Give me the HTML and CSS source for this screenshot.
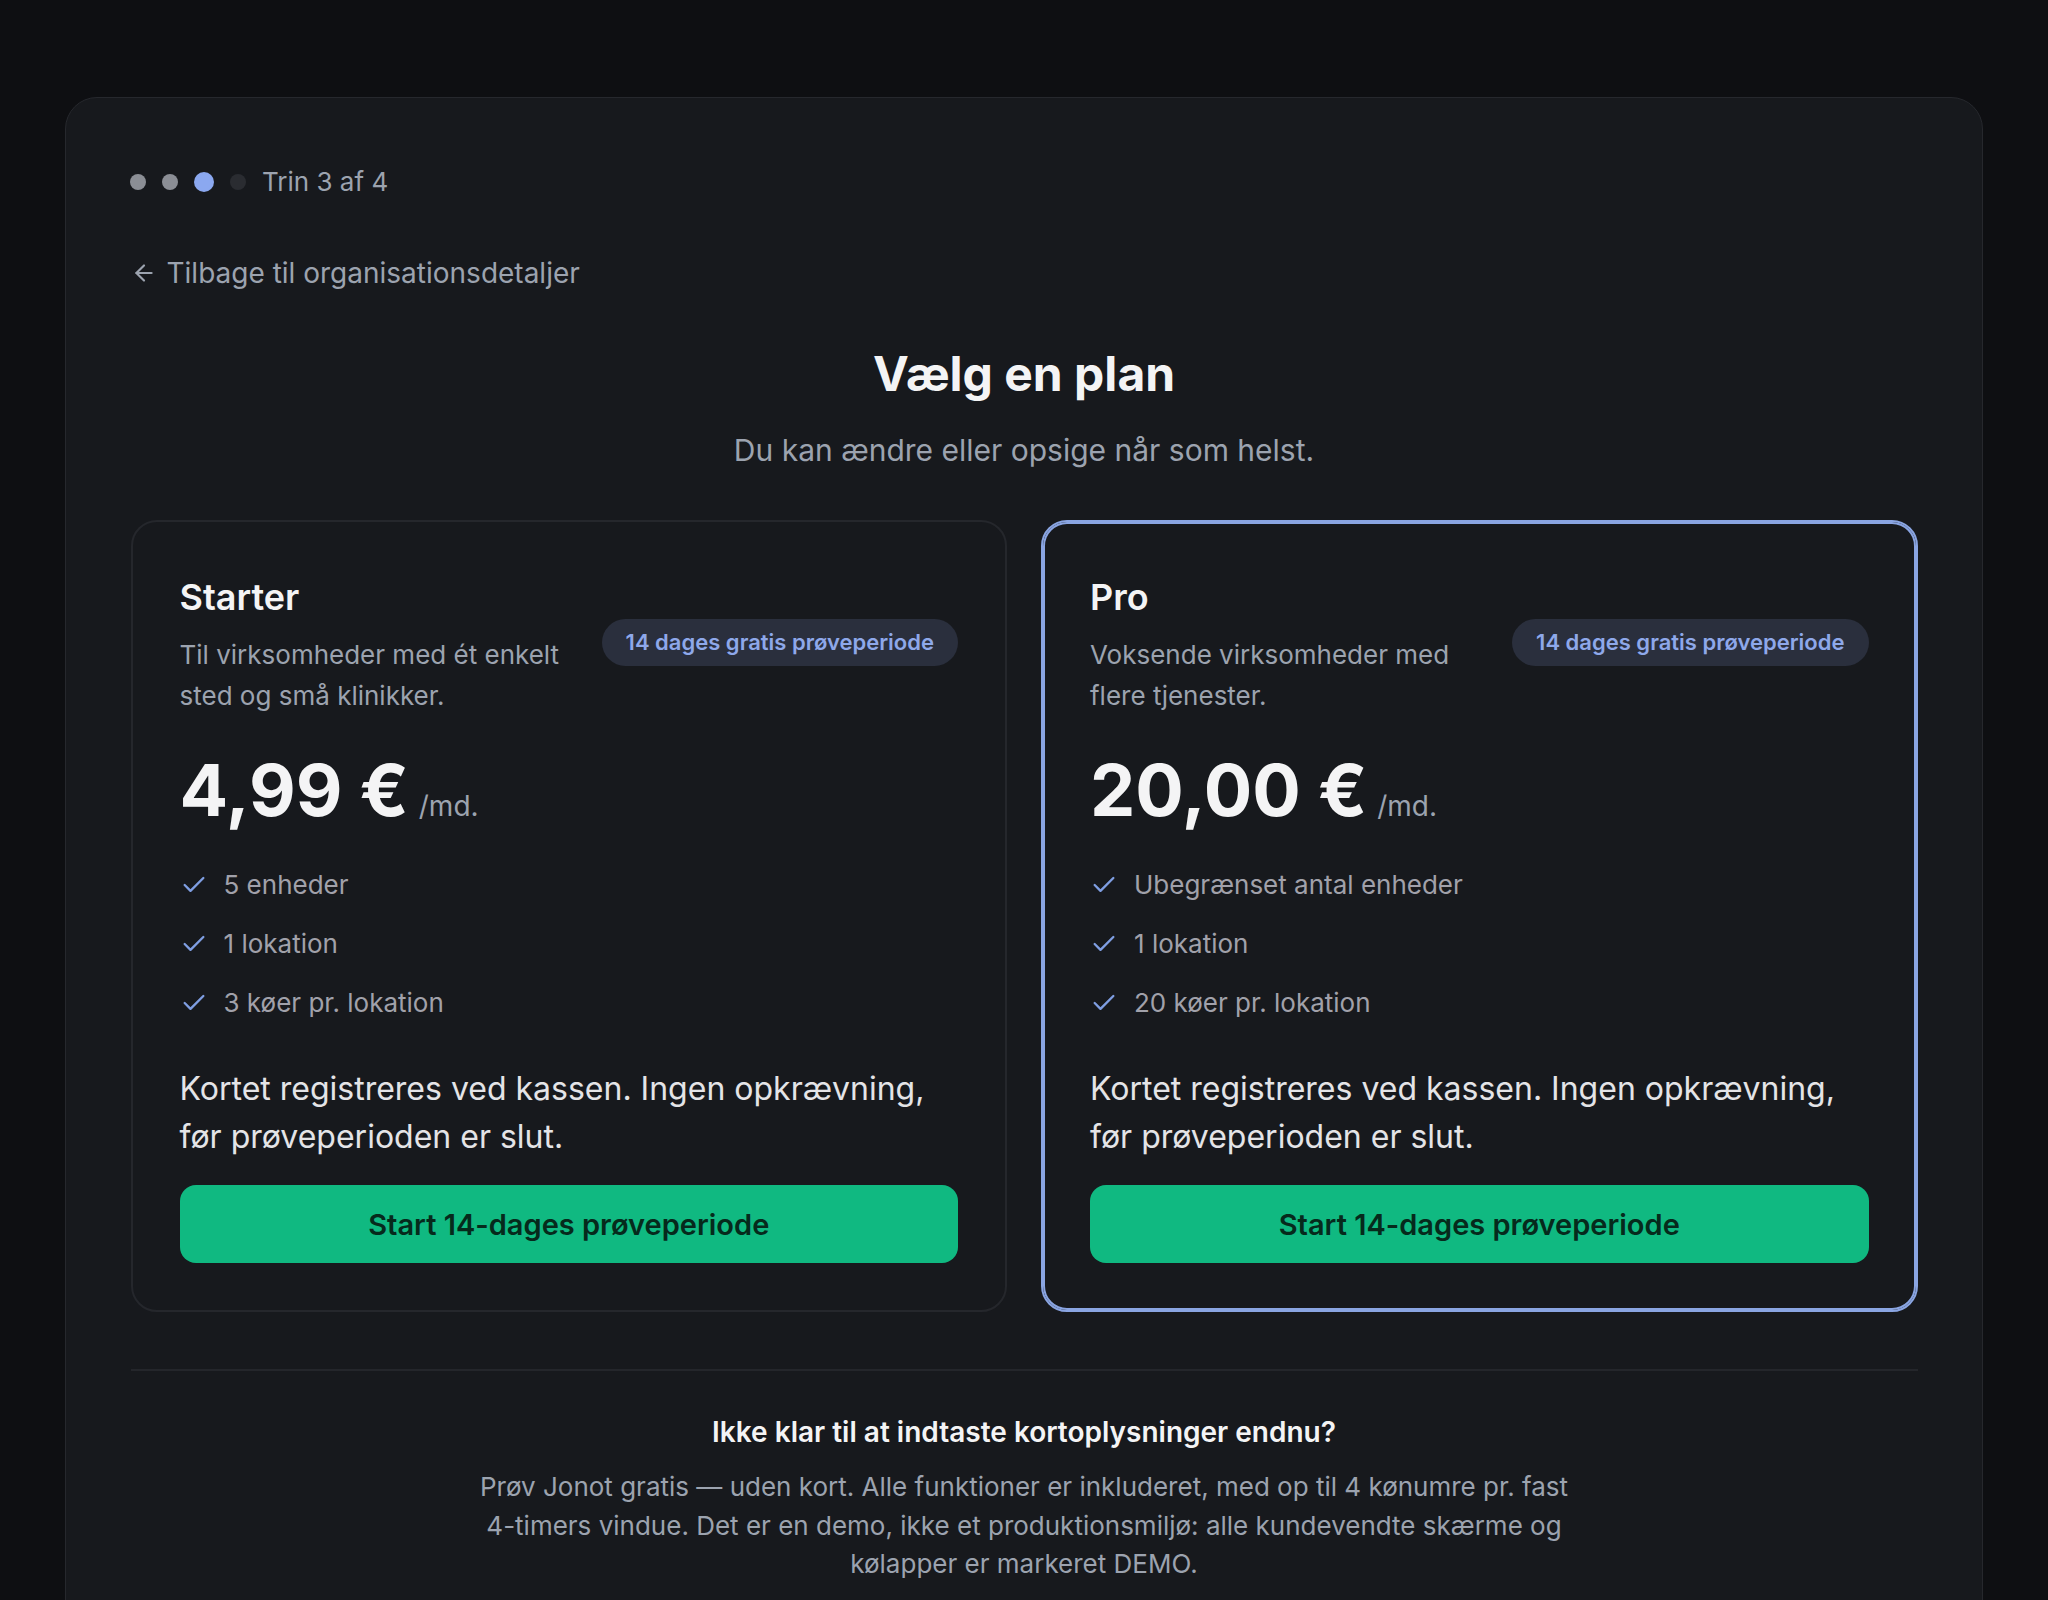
FILE: index.html
```html
<!DOCTYPE html>
<html lang="da">
<head>
<meta charset="utf-8">
<title>Vælg en plan</title>
<link rel="stylesheet" href="styles.css">
</head>
<body>
<main class="panel">
  <div class="steps">
    <span class="dot dot-done"></span>
    <span class="dot dot-done"></span>
    <span class="dot dot-active"></span>
    <span class="dot dot-todo"></span>
    <span class="steps-label">Trin 3 af 4</span>
  </div>

  <a class="back" href="#">
    <svg class="back-icon" viewBox="0 0 24 24" fill="none" stroke="currentColor" stroke-width="2" stroke-linecap="round" stroke-linejoin="round"><path d="M12 19l-7-7 7-7"/><path d="M19 12H5"/></svg>
    <span>Tilbage til organisationsdetaljer</span>
  </a>

  <header class="intro">
    <h1 class="title">Vælg en plan</h1>
    <p class="subtitle">Du kan ændre eller opsige når som helst.</p>
  </header>

  <section class="plans">
    <article class="plan">
      <div class="plan-head">
        <div class="plan-info">
          <h2 class="plan-name">Starter</h2>
          <p class="plan-desc">Til virksomheder med ét enkelt sted og små klinikker.</p>
        </div>
        <span class="badge">14 dages gratis prøveperiode</span>
      </div>
      <div class="price-row">
        <span class="price">4,99 €</span>
        <span class="per">/md.</span>
      </div>
      <ul class="features">
        <li><svg class="check" viewBox="0 0 24 24" fill="none" stroke="currentColor" stroke-width="2" stroke-linecap="round" stroke-linejoin="round"><path d="M20 6 9 17l-5-5"/></svg>5 enheder</li>
        <li><svg class="check" viewBox="0 0 24 24" fill="none" stroke="currentColor" stroke-width="2" stroke-linecap="round" stroke-linejoin="round"><path d="M20 6 9 17l-5-5"/></svg>1 lokation</li>
        <li><svg class="check" viewBox="0 0 24 24" fill="none" stroke="currentColor" stroke-width="2" stroke-linecap="round" stroke-linejoin="round"><path d="M20 6 9 17l-5-5"/></svg>3 køer pr. lokation</li>
      </ul>
      <p class="note">Kortet registreres ved kassen. Ingen opkrævning, før prøveperioden er slut.</p>
      <button class="cta" type="button">Start 14-dages prøveperiode</button>
    </article>

    <article class="plan plan-featured">
      <div class="plan-head">
        <div class="plan-info">
          <h2 class="plan-name">Pro</h2>
          <p class="plan-desc">Voksende virksomheder med flere tjenester.</p>
        </div>
        <span class="badge">14 dages gratis prøveperiode</span>
      </div>
      <div class="price-row">
        <span class="price">20,00 €</span>
        <span class="per">/md.</span>
      </div>
      <ul class="features">
        <li><svg class="check" viewBox="0 0 24 24" fill="none" stroke="currentColor" stroke-width="2" stroke-linecap="round" stroke-linejoin="round"><path d="M20 6 9 17l-5-5"/></svg>Ubegrænset antal enheder</li>
        <li><svg class="check" viewBox="0 0 24 24" fill="none" stroke="currentColor" stroke-width="2" stroke-linecap="round" stroke-linejoin="round"><path d="M20 6 9 17l-5-5"/></svg>1 lokation</li>
        <li><svg class="check" viewBox="0 0 24 24" fill="none" stroke="currentColor" stroke-width="2" stroke-linecap="round" stroke-linejoin="round"><path d="M20 6 9 17l-5-5"/></svg>20 køer pr. lokation</li>
      </ul>
      <p class="note">Kortet registreres ved kassen. Ingen opkrævning, før prøveperioden er slut.</p>
      <button class="cta" type="button">Start 14-dages prøveperiode</button>
    </article>
  </section>

  <section class="demo">
    <h3 class="demo-title">Ikke klar til at indtaste kortoplysninger endnu?</h3>
    <p class="demo-text">Prøv Jonot gratis — uden kort. Alle funktioner er inkluderet, med op til 4 kønumre pr. fast 4-timers vindue. Det er en demo, ikke et produktionsmiljø: alle kundevendte skærme og kølapper er markeret DEMO.</p>
  </section>
</main>
</body>
</html>
```

FILE: styles.css
```css
* {
  box-sizing: border-box;
}

html, body {
  margin: 0;
  overflow: hidden;
}

body {
  background: #0e0f12;
  font-family: Inter, "Noto Sans", "Liberation Sans", sans-serif;
  color: #f4f4f5;
  padding: 97px 65px 0;
  min-height: 1600px;
}

.panel {
  background: #17191d;
  border: 1.5px solid #26282d;
  border-radius: 32px;
  padding: 64px 64.5px;
  display: flex;
  flex-direction: column;
}

/* steps */
.steps {
  display: flex;
  align-items: center;
  gap: 16px;
  height: 39px;
  margin-left: -0.5px;
}

.dot {
  width: 16px;
  height: 16px;
  border-radius: 50%;
  flex-shrink: 0;
}

.dot-done {
  background: #8b8e95;
}

.dot-active {
  width: 20px;
  height: 20px;
  background: #8ba8f0;
}

.dot-todo {
  background: #2a2c31;
}

.steps-label {
  font-size: 26px;
  line-height: 39px;
  color: #9ca3af;
}

/* back link */
.back {
  margin-top: 50.5px;
  display: flex;
  align-items: center;
  gap: 10px;
  align-self: flex-start;
  color: #9ca3af;
  text-decoration: none;
  font-size: 28px;
  line-height: 42px;
  margin-left: -1.5px;
}

.back-icon {
  width: 26px;
  height: 26px;
  margin-left: 1.5px;
}

/* intro */
.intro {
  text-align: center;
  margin-top: 51.5px;
}

.title {
  margin: 0;
  font-size: 48px;
  line-height: 58px;
  font-weight: 700;
  color: #f4f4f5;
}

.subtitle {
  margin: 25px 0 0;
  font-size: 30px;
  line-height: 45px;
  color: #9ca3af;
}

/* plans */
.plans {
  margin-top: 47px;
  display: grid;
  grid-template-columns: 1fr 1fr;
  gap: 34px;
}

.plan {
  border: 2px solid #25272c;
  border-radius: 26px;
  padding: 47px;
  background: #17191d;
  display: flex;
  flex-direction: column;
}

.plan-featured {
  border-color: #8aa5e2;
  box-shadow: inset 0 0 0 2px #8aa5e2;
}

.plan-head {
  display: flex;
  align-items: center;
  gap: 24px;
}

.plan-info {
  flex: 1;
  min-width: 0;
}

.plan-name {
  margin: 0;
  font-size: 36px;
  line-height: 54px;
  font-weight: 600;
  color: #f4f4f5;
  position: relative;
  top: 1px;
}

.plan-desc {
  margin: 11px 0 0;
  font-size: 26px;
  line-height: 41px;
  color: #9ca3af;
}

.badge {
  flex-shrink: 0;
  background: #2a2f3d;
  color: #8ea8ea;
  font-size: 22px;
  line-height: 27px;
  font-weight: 600;
  padding: 10px 24px;
  border-radius: 999px;
  white-space: nowrap;
}

.price-row {
  margin-top: 38px;
  display: flex;
  align-items: baseline;
  gap: 10px;
}

.price {
  font-size: 72px;
  line-height: 72px;
  font-weight: 700;
  color: #f4f4f5;
}

.per {
  font-size: 28px;
  color: #9ca3af;
}

.features {
  list-style: none;
  margin: 39px 0 0;
  padding: 0;
  display: flex;
  flex-direction: column;
  gap: 20px;
}

.features li {
  display: flex;
  align-items: center;
  gap: 16px;
  font-size: 26px;
  line-height: 39px;
  color: #a1a1aa;
}

.check {
  width: 28px;
  height: 28px;
  color: #7f9ee2;
  flex-shrink: 0;
}

.note {
  margin: 43px 0 0;
  font-size: 32px;
  line-height: 48px;
  color: #e4e4e7;
}

.cta {
  margin-top: 24px;
  height: 78px;
  width: 100%;
  border: none;
  border-radius: 16px;
  background: #10b981;
  color: #062a1c;
  font-family: inherit;
  font-size: 29px;
  font-weight: 600;
  cursor: pointer;
}

/* demo */
.demo {
  margin-top: 57px;
  border-top: 2px solid #24262b;
  padding-top: 40px;
  text-align: center;
  display: flex;
  flex-direction: column;
  align-items: center;
}

.demo-title {
  margin: 0;
  font-size: 28px;
  line-height: 42px;
  font-weight: 600;
  color: #f4f4f5;
}

.demo-text {
  margin: 15px 0 0;
  max-width: 1120px;
  font-size: 26px;
  line-height: 38.5px;
  color: #9ca3af;
}
```
